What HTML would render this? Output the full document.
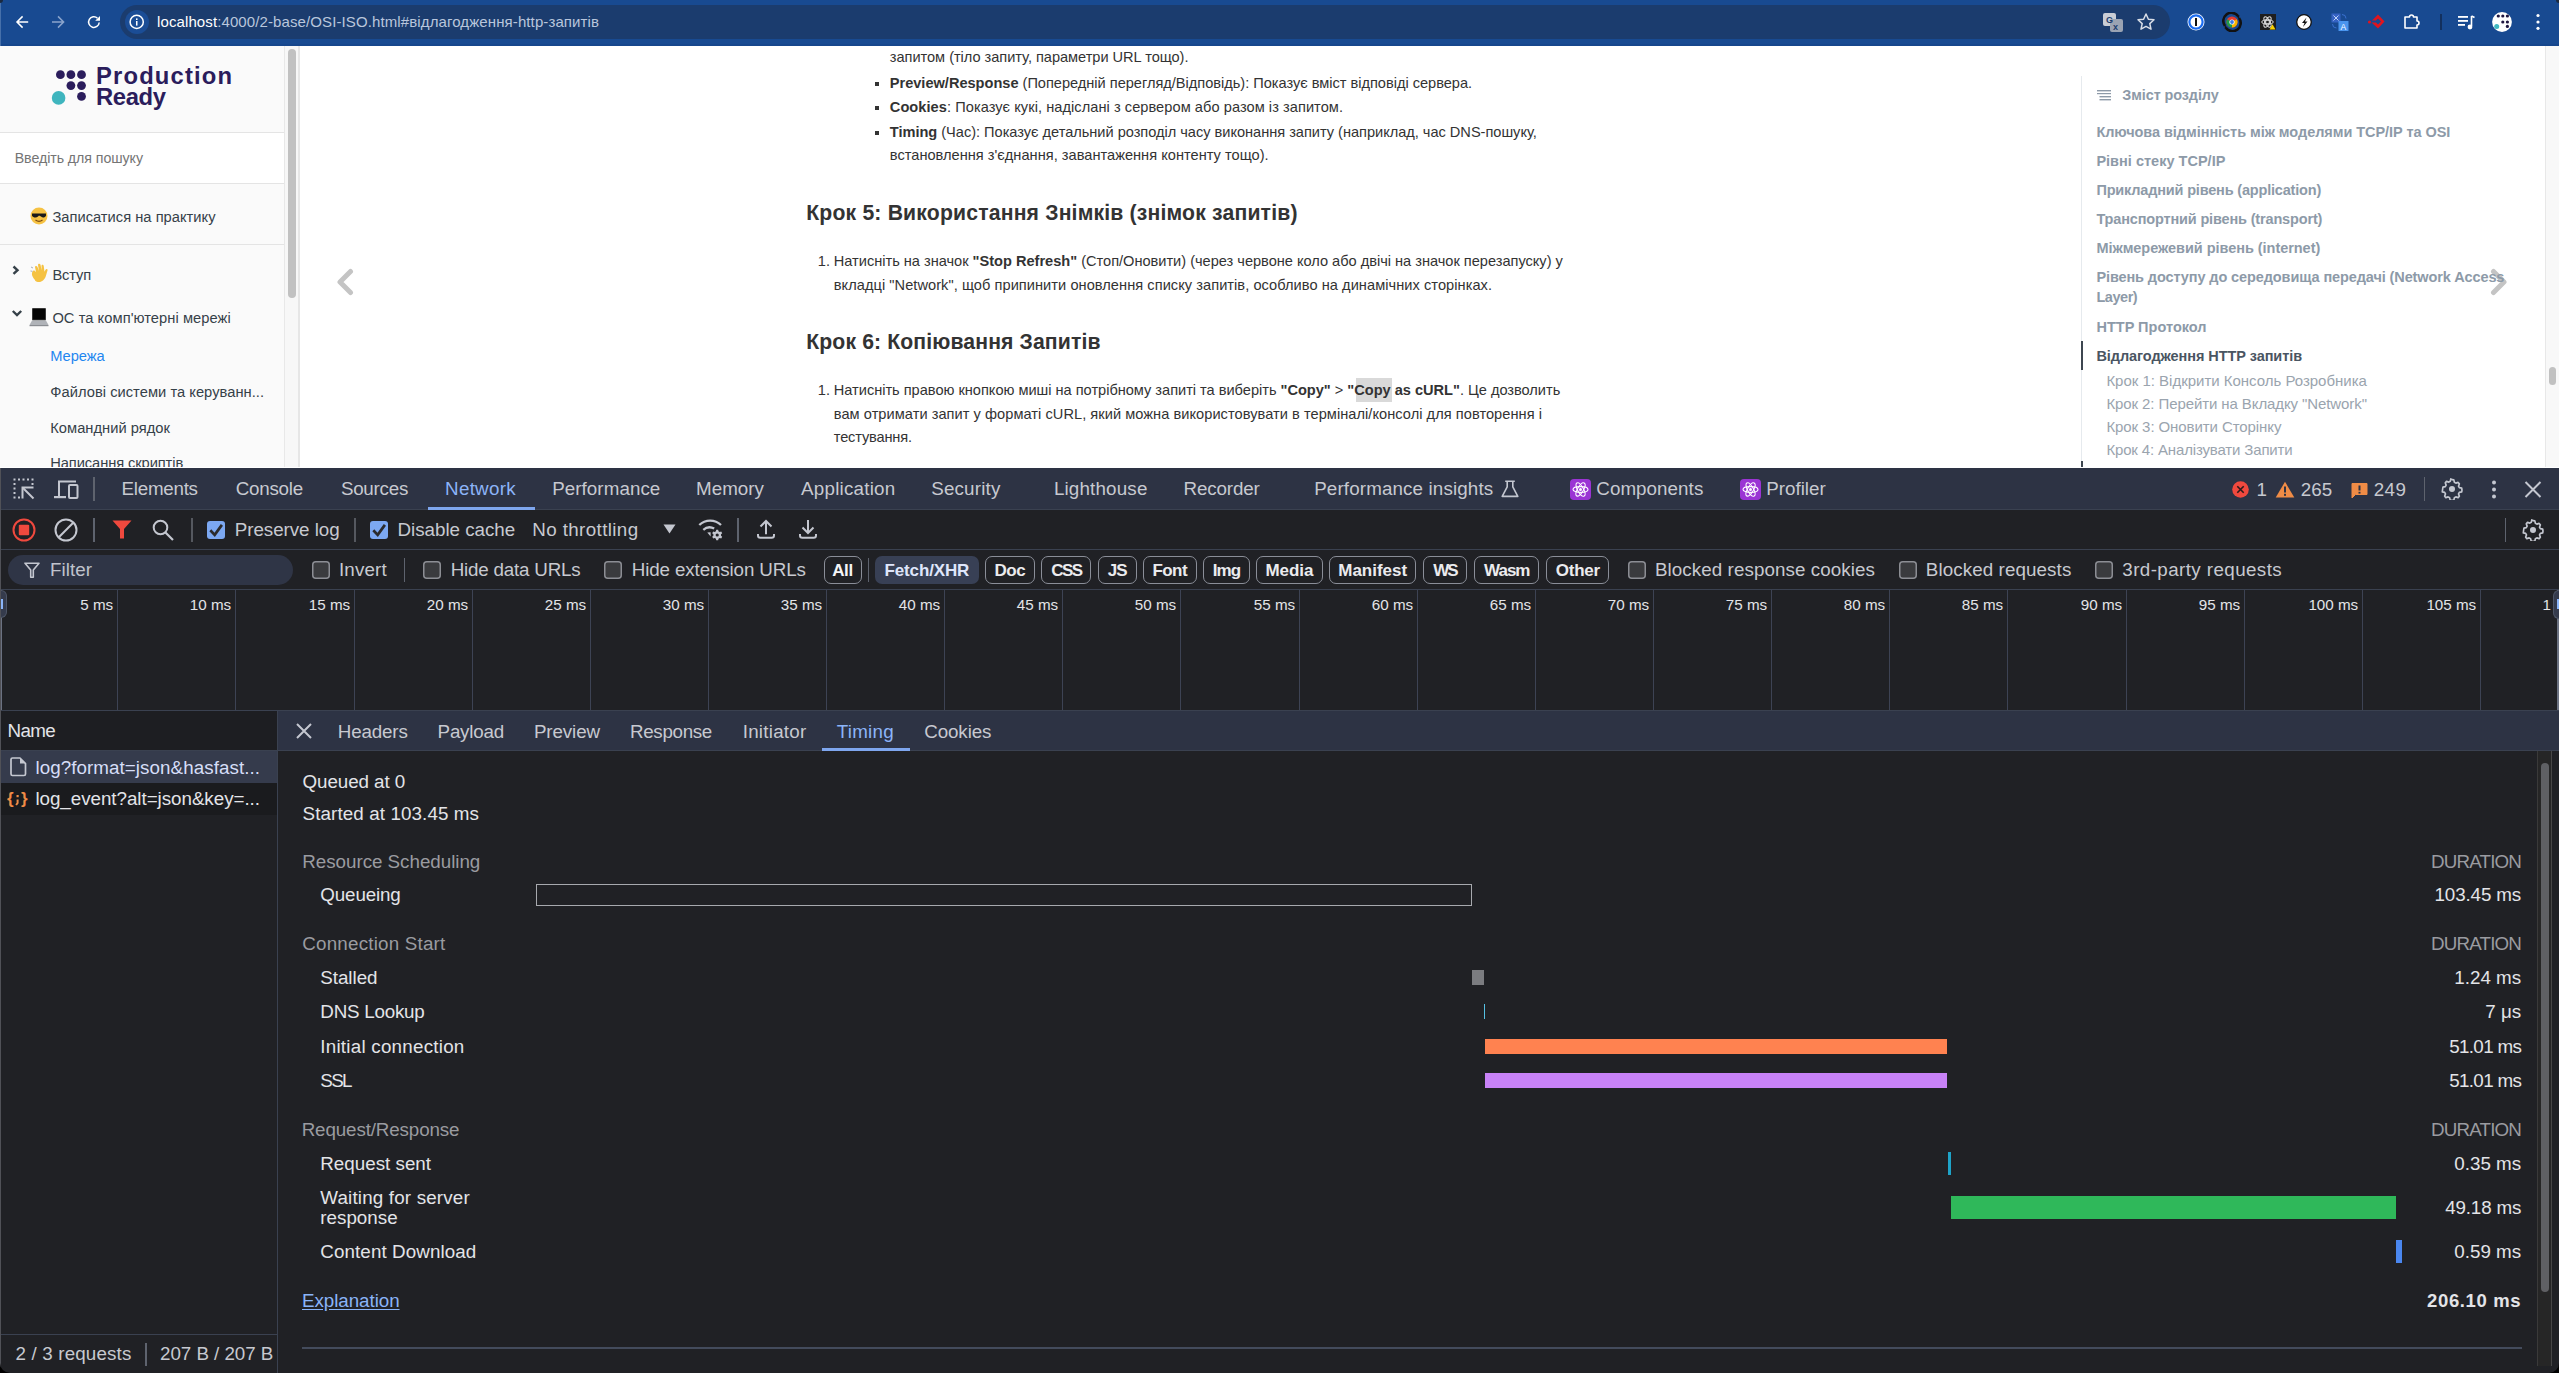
<!DOCTYPE html>
<html><head><meta charset="utf-8"><style>
html,body{margin:0;padding:0;}
body{width:2559px;height:1373px;position:relative;overflow:hidden;background:#202125;font-family:"Liberation Sans",sans-serif;}
body>div,body>svg{position:absolute;}
.t{white-space:nowrap;line-height:1;}
b{font-weight:700;}
</style></head><body>
<div style="left:0px;top:0px;width:2559px;height:46px;background:#184a91;"></div>
<div style="left:0px;top:44px;width:2559px;height:2px;background:#16468c;"></div>
<div style="left:0px;top:0px;width:1px;height:46px;background:#4670aa;"></div>
<div style="left:0px;top:0px;width:3px;height:3px;background:#1b2a40;border-bottom-right-radius:3px;"></div>
<div style="left:2556px;top:0px;width:3px;height:3px;background:#1b2a40;border-bottom-left-radius:3px;"></div>
<div style="left:120px;top:5px;width:2050px;height:34px;background:#1b3c6e;border-radius:17px;"></div>
<div style="left:124.5px;top:10px;width:24px;height:24px;background:#1b4d96;border-radius:12px;"></div>
<svg style="left:128px;top:13px;" width="18" height="18" viewBox="0 0 18 18"><circle cx="8.7" cy="8.9" r="6.6" fill="none" stroke="#fff" stroke-width="1.5"/><rect x="8" y="8" width="1.5" height="4.6" fill="#fff"/><rect x="8" y="5.4" width="1.5" height="1.6" fill="#fff"/></svg>
<svg style="left:14px;top:13px;" width="18" height="18" viewBox="0 0 18 18"><path d="M14.2 9H3M8.6 3.4L3 9l5.6 5.6" fill="none" stroke="#fff" stroke-width="1.5"/></svg>
<svg style="left:50px;top:13px;" width="18" height="18" viewBox="0 0 18 18"><path d="M2 9h11.5M8 3.4L13.6 9 8 14.6" fill="none" stroke="#8aa4cc" stroke-width="1.5"/></svg>
<svg style="left:85px;top:13px;" width="18" height="18" viewBox="0 0 18 18"><path d="M14.2 9.5A5.3 5.3 0 1 1 12.5 5.2" fill="none" stroke="#fff" stroke-width="1.5"/><path d="M15 3v4.8h-4.8z" fill="#fff"/></svg>
<div class="t" style="top:14.00px;font-size:15px;color:#b9c6dc;font-weight:400;letter-spacing:0.108px;left:157px;"><span style="color:#fff">localhost</span>:4000/2-base/OSI-ISO.html#відлагодження-http-запитів</div>
<svg style="left:2102px;top:11px;" width="24" height="22" viewBox="0 0 24 22"><rect x="1" y="2" width="13" height="13" rx="2" fill="#c9cdd6"/><rect x="8" y="8" width="13" height="13" rx="2" fill="#9aa3b3"/><text x="4" y="12" font-size="9" font-family="Liberation Sans" font-weight="700" fill="#1b3c6e">G</text><text x="11" y="19" font-size="9" font-family="Liberation Sans" font-weight="700" fill="#1b3c6e">x</text></svg>
<svg style="left:2136px;top:12px;" width="20" height="20" viewBox="0 0 20 20"><path d="M10 2l2.4 5.2 5.6.6-4.2 3.8 1.2 5.6L10 14.4 5 17.2l1.2-5.6L2 7.8l5.6-.6z" fill="none" stroke="#d8dde6" stroke-width="1.5" stroke-linejoin="round"/></svg>
<svg style="left:2186px;top:12px;" width="20" height="20" viewBox="0 0 20 20"><circle cx="10" cy="10" r="8.5" fill="#fff"/><circle cx="10" cy="10" r="6.6" fill="none" stroke="#1a6cf0" stroke-width="2.2"/><rect x="9" y="6" width="2" height="8" fill="#111"/></svg>
<svg style="left:2222px;top:12px;" width="20" height="20" viewBox="0 0 20 20"><path d="M3 14A7.5 7.5 0 0 1 16 4" fill="none" stroke="#111" stroke-width="2.6"/><path d="M17 6A7.5 7.5 0 0 1 4 16" fill="none" stroke="#111" stroke-width="2.6"/><path d="M14 2.5l3.5 1-1 3.5z" fill="#111"/><path d="M6 17.5l-3.5-1 1-3.5z" fill="#111"/><circle cx="10" cy="10" r="5.6" fill="#e33b2e"/><path d="M10 10L14.85 7.2A5.6 5.6 0 0 1 10 15.6z" fill="#f6b400"/><path d="M10 10L10 15.6A5.6 5.6 0 0 1 5.15 7.2z" fill="#1a9c4a"/><circle cx="10" cy="10" r="2.6" fill="#fff"/><circle cx="10" cy="10" r="1.9" fill="#3b78e7"/></svg>
<svg style="left:2260px;top:14px;" width="16" height="16" viewBox="0 0 16 16"><rect x="0" y="0" width="16" height="16" fill="#1e1e1e"/><ellipse cx="7.5" cy="8" rx="5.8" ry="2.3" fill="none" stroke="#ddd" stroke-width="1"/><ellipse cx="7.5" cy="8" rx="5.8" ry="2.3" fill="none" stroke="#ddd" stroke-width="1" transform="rotate(60 7.5 8)"/><ellipse cx="7.5" cy="8" rx="5.8" ry="2.3" fill="none" stroke="#ddd" stroke-width="1" transform="rotate(-60 7.5 8)"/><rect x="5.8" y="6.3" width="3.4" height="3.4" fill="none" stroke="#ddd" stroke-width="0.9"/><path d="M9.5 15.5l3-5.2 3 5.2z" fill="#f5d000"/></svg>
<svg style="left:2296px;top:14px;" width="16" height="16" viewBox="0 0 16 16"><circle cx="8" cy="8" r="7.3" fill="#fff" stroke="#111" stroke-width="1.3"/><path d="M10.5 3.5L6 9h2.5l-1.5 4 4.5-5.5H9z" fill="#111"/></svg>
<svg style="left:2331px;top:13px;" width="20" height="20" viewBox="0 0 20 20"><rect x="0.5" y="0.5" width="9" height="9" fill="#3563c4"/><rect x="7.5" y="8" width="10" height="10" rx="0.5" fill="#4a95ee"/><path d="M2.5 2.5l5 5M7.5 2.5l-5 5" stroke="#cfe0ff" stroke-width="0.9"/><text x="9.5" y="16.5" font-size="8.5" fill="#fff" font-family="Liberation Sans">A</text><path d="M11 1.5a4 4 0 0 1 4 4M1.5 11a4 4 0 0 0 4 4" fill="none" stroke="#3d74d6" stroke-width="0.9"/></svg>
<svg style="left:2367px;top:14px;" width="18" height="16" viewBox="0 0 18 16"><circle cx="2.5" cy="8" r="1.6" fill="#e0141e"/><path d="M11 0.5L17.5 7.5 11 14.5 4.5 8.5h4.5L11 10.5 14 7.5 11 4.5l-2 2H5z" fill="#e0141e"/></svg>
<svg style="left:2404px;top:13px;" width="18" height="17" viewBox="0 0 18 17"><path d="M1 4h4.5a2 2 0 0 1 4 0H13v4a2 2 0 0 1 0 4v3H1z" fill="none" stroke="#fff" stroke-width="1.6" stroke-linejoin="round"/></svg>
<div style="left:2440px;top:14px;width:2px;height:16px;background:#12305e;"></div>
<svg style="left:2456px;top:12px;" width="20" height="20" viewBox="0 0 20 20"><rect x="2" y="4" width="10" height="1.8" fill="#fff"/><rect x="2" y="8" width="10" height="1.8" fill="#fff"/><rect x="2" y="12" width="7" height="1.8" fill="#fff"/><path d="M15.5 4v10" stroke="#fff" stroke-width="1.6"/><circle cx="14" cy="15" r="2.4" fill="#fff"/><path d="M15.5 4l3 1.5" stroke="#fff" stroke-width="1.6"/></svg>
<svg style="left:2491px;top:11px;" width="22" height="22" viewBox="0 0 22 22"><circle cx="11" cy="11" r="9.9" fill="#fff"/><g fill="#1f1640"><circle cx="7.3" cy="5" r="1.6"/><circle cx="11.8" cy="5" r="1.6"/><circle cx="16.4" cy="5" r="1.6"/><circle cx="11.8" cy="11" r="1.6"/><circle cx="16.4" cy="11" r="1.6"/><circle cx="16.4" cy="15.4" r="1.6"/></g><circle cx="5.7" cy="15.6" r="2.5" fill="#3fb8c0"/></svg>
<svg style="left:2533px;top:12px;" width="10" height="20" viewBox="0 0 10 20"><circle cx="5" cy="3.5" r="1.6" fill="#fff"/><circle cx="5" cy="10" r="1.6" fill="#fff"/><circle cx="5" cy="16.3" r="1.6" fill="#fff"/></svg>
<div style="left:0px;top:46px;width:2559px;height:422px;background:#ffffff;"></div>
<div style="left:0px;top:46px;width:285px;height:422px;background:#fafafa;"></div>
<div style="left:284px;top:46px;width:1px;height:422px;background:#e8e8e8;"></div>
<div style="left:285px;top:46px;width:14px;height:422px;background:#f7f7f7;"></div>
<div style="left:298px;top:46px;width:2px;height:422px;background:#e6e6e6;"></div>
<div style="left:288px;top:49px;width:8px;height:249px;background:#c1c1c1;border-radius:4px;"></div>
<svg style="left:50px;top:64px;overflow:visible;" width="32" height="42" viewBox="0 0 32 42"><g fill="#2b1d5c"><circle cx="10.4" cy="10.7" r="4.4"/><circle cx="20.9" cy="10.7" r="4.4"/><circle cx="31.5" cy="10.7" r="4.4"/><circle cx="20.9" cy="21.6" r="4.4"/><circle cx="31.5" cy="21.6" r="4.4"/><circle cx="31.5" cy="32.4" r="4.4"/></g><circle cx="8.6" cy="33.9" r="6.8" fill="#3fb5be"/></svg>
<div class="t" style="top:64.00px;font-size:23.8px;color:#2b1d5c;font-weight:700;letter-spacing:1.167px;left:96px;">Production</div>
<div class="t" style="top:85.00px;font-size:23.8px;color:#2b1d5c;font-weight:700;letter-spacing:-0.384px;left:96px;">Ready</div>
<div style="left:0px;top:132px;width:284px;height:1px;background:#e4e4e4;"></div>
<div style="left:0px;top:133px;width:284px;height:50px;background:#ffffff;"></div>
<div style="left:0px;top:183px;width:284px;height:1px;background:#e4e4e4;"></div>
<div class="t" style="top:151.00px;font-size:14.2px;color:#757575;font-weight:400;letter-spacing:-0.063px;left:14.7px;">Введіть для пошуку</div>
<div style="left:0px;top:244px;width:284px;height:1px;background:#e4e4e4;"></div>
<svg style="left:30px;top:207px;" width="18" height="18" viewBox="0 0 18 18"><circle cx="9" cy="9" r="8.5" fill="#f6c243"/><path d="M2 6.5h14v2.2c-1 2-3.5 2.3-5 .8L9 8.4 8 9.5C6.5 11 3 10.7 2 8.7z" fill="#1a1a1a"/><path d="M5.5 13c2 1.5 5 1.5 7 0" stroke="#7a4a12" stroke-width="1.2" fill="none"/></svg>
<div class="t" style="top:210.00px;font-size:14.7px;color:#364149;font-weight:400;letter-spacing:0.014px;left:52.4px;">Записатися на практику</div>
<svg style="left:11px;top:264px;" width="9" height="12" viewBox="0 0 9 12"><path d="M2.5 2.5l4 3.7-4 3.7" fill="none" stroke="#364149" stroke-width="2.4"/></svg>
<svg style="left:30px;top:263px;" width="19" height="20" viewBox="0 0 19 20"><path d="M5 17c-3-3-4-7-2-9 1-1 2 0 3 1l-1-5c0-1.5 2-1.5 2.5 0l1.5 4-1-6c0-1.5 2-1.7 2.5-.2l1.2 5.5-.2-4.5c0-1.5 2-1.5 2.2 0l.8 6 1-2c.8-1.5 2.5-.8 2 .8l-1.5 5c-1 4-4 6.5-7 6.5-1.5 0-3-.5-4-1.6z" fill="#f5c242"/><path d="M1 4l2 1M0.5 8l2 .3" stroke="#a8b0bc" stroke-width="1"/></svg>
<div class="t" style="top:268.00px;font-size:14.7px;color:#364149;font-weight:400;letter-spacing:-0.111px;left:52.4px;">Вступ</div>
<svg style="left:11px;top:309px;" width="12" height="10" viewBox="0 0 12 10"><path d="M1.8 2l4.2 4 4.2-4" fill="none" stroke="#364149" stroke-width="2.4"/></svg>
<svg style="left:29px;top:307px;" width="20" height="20" viewBox="0 0 20 20"><rect x="3" y="1" width="14" height="12.5" rx="1" fill="#3a3a3a"/><rect x="4" y="2" width="12" height="10.5" fill="#050505"/><path d="M3 13.5h14l2.5 4.5H0.5z" fill="#b0b3b8"/><rect x="0.5" y="18" width="19" height="1.2" fill="#8a8d92"/></svg>
<div class="t" style="top:311.00px;font-size:14.7px;color:#364149;font-weight:400;letter-spacing:0.051px;left:52.4px;">ОС та комп'ютерні мережі</div>
<div class="t" style="top:349.00px;font-size:14.7px;color:#1f86f0;font-weight:400;letter-spacing:-0.087px;left:50.3px;">Мережа</div>
<div class="t" style="top:385.00px;font-size:14.7px;color:#364149;font-weight:400;letter-spacing:0.031px;left:50.3px;">Файлові системи та керуванн...</div>
<div class="t" style="top:421.00px;font-size:14.7px;color:#364149;font-weight:400;letter-spacing:0.021px;left:50.3px;">Командний рядок</div>
<div class="t" style="top:456.00px;font-size:14.7px;color:#364149;font-weight:400;letter-spacing:-0.100px;left:50.3px;">Написання скриптів</div>
<div class="t" style="top:50.00px;font-size:14.6px;color:#333333;font-weight:400;letter-spacing:-0.032px;left:889.8px;">запитом (тіло запиту, параметри URL тощо).</div>
<div style="left:875px;top:82px;width:4px;height:4px;background:#333;"></div>
<div class="t" style="top:76.00px;font-size:14.6px;color:#333333;font-weight:400;letter-spacing:-0.017px;left:889.8px;"><b>Preview/Response</b> (Попередній перегляд/Відповідь): Показує вміст відповіді сервера.</div>
<div style="left:875px;top:106px;width:4px;height:4px;background:#333;"></div>
<div class="t" style="top:100.00px;font-size:14.6px;color:#333333;font-weight:400;letter-spacing:0.056px;left:889.8px;"><b>Cookies</b>: Показує кукі, надіслані з сервером або разом із запитом.</div>
<div style="left:875px;top:131px;width:4px;height:4px;background:#333;"></div>
<div class="t" style="top:125.00px;font-size:14.6px;color:#333333;font-weight:400;letter-spacing:-0.020px;left:889.8px;"><b>Timing</b> (Час): Показує детальний розподіл часу виконання запиту (наприклад, час DNS-пошуку,</div>
<div class="t" style="top:148.00px;font-size:14.6px;color:#333333;font-weight:400;letter-spacing:0.018px;left:889.8px;">встановлення з'єднання, завантаження контенту тощо).</div>
<div class="t" style="top:202.00px;font-size:21.2px;color:#333333;font-weight:700;letter-spacing:0.170px;left:806.25px;">Крок 5: Використання Знімків (знімок запитів)</div>
<div class="t" style="top:254.00px;font-size:14.6px;color:#333333;font-weight:400;left:817.8px;">1.</div>
<div class="t" style="top:254.00px;font-size:14.6px;color:#333333;font-weight:400;letter-spacing:-0.012px;left:833.8px;">Натисніть на значок <b>"Stop Refresh"</b> (Стоп/Оновити) (через червоне коло або двічі на значок перезапуску) у</div>
<div class="t" style="top:278.00px;font-size:14.6px;color:#333333;font-weight:400;letter-spacing:0.054px;left:833.8px;">вкладці "Network", щоб припинити оновлення списку запитів, особливо на динамічних сторінках.</div>
<div class="t" style="top:331.00px;font-size:21.2px;color:#333333;font-weight:700;letter-spacing:0.119px;left:806.25px;">Крок 6: Копіювання Запитів</div>
<div style="left:1356px;top:378px;width:36px;height:24px;background:#d9d9d9;"></div>
<div class="t" style="top:383.00px;font-size:14.6px;color:#333333;font-weight:400;left:817.8px;">1.</div>
<div class="t" style="top:383.00px;font-size:14.6px;color:#333333;font-weight:400;letter-spacing:-0.017px;left:833.8px;">Натисніть правою кнопкою миші на потрібному запиті та виберіть <b>"Copy"</b> &gt; <b>"Copy as cURL"</b>. Це дозволить</div>
<div class="t" style="top:407.00px;font-size:14.6px;color:#333333;font-weight:400;letter-spacing:0.048px;left:833.8px;">вам отримати запит у форматі cURL, який можна використовувати в терміналі/консолі для повторення і</div>
<div class="t" style="top:430.00px;font-size:14.6px;color:#333333;font-weight:400;letter-spacing:-0.166px;left:833.8px;">тестування.</div>
<svg style="left:335px;top:268px;" width="20" height="30" viewBox="0 0 20 30"><path d="M15.5 3.5L5 14l10.5 10.5" fill="none" stroke="#c4c4c4" stroke-width="5" stroke-linejoin="round" stroke-linecap="round"/></svg>
<svg style="left:2489px;top:268px;" width="20" height="30" viewBox="0 0 20 30"><path d="M4.5 3.5L15 14 4.5 24.5" fill="none" stroke="#c4c4c4" stroke-width="5" stroke-linejoin="round" stroke-linecap="round"/></svg>
<div style="left:2081px;top:76px;width:1px;height:392px;background:#e6eaee;"></div>
<svg style="left:2096px;top:89px;" width="16" height="12" viewBox="0 0 16 12"><g fill="#8d9aa8"><rect x="1" y="1" width="14" height="1.4"/><rect x="1" y="4" width="14" height="1.2"/><rect x="3.5" y="7" width="11.5" height="1.4"/><rect x="3.5" y="10" width="11.5" height="1.4"/></g></svg>
<div class="t" style="top:88.00px;font-size:14.4px;color:#8d9aa8;font-weight:700;letter-spacing:-0.079px;left:2122.3px;">Зміст розділу</div>
<div class="t" style="top:125.00px;font-size:14.5px;color:#8d9aa8;font-weight:700;letter-spacing:-0.047px;left:2096.4px;">Ключова відмінність між моделями TCP/IP та OSI</div>
<div class="t" style="top:154.00px;font-size:14.5px;color:#8d9aa8;font-weight:700;letter-spacing:0.015px;left:2096.4px;">Рівні стеку TCP/IP</div>
<div class="t" style="top:183.00px;font-size:14.5px;color:#8d9aa8;font-weight:700;letter-spacing:-0.180px;left:2096.4px;">Прикладний рівень (application)</div>
<div class="t" style="top:212.00px;font-size:14.5px;color:#8d9aa8;font-weight:700;letter-spacing:-0.157px;left:2096.4px;">Транспортний рівень (transport)</div>
<div class="t" style="top:241.00px;font-size:14.5px;color:#8d9aa8;font-weight:700;letter-spacing:-0.040px;left:2096.4px;">Міжмережевий рівень (internet)</div>
<div class="t" style="top:270.00px;font-size:14.5px;color:#8d9aa8;font-weight:700;letter-spacing:-0.105px;left:2096.4px;">Рівень доступу до середовища передачі (Network Access</div>
<div class="t" style="top:290.00px;font-size:14.5px;color:#8d9aa8;font-weight:700;letter-spacing:-0.446px;left:2096.4px;">Layer)</div>
<div class="t" style="top:320.00px;font-size:14.5px;color:#8d9aa8;font-weight:700;letter-spacing:0.021px;left:2096.4px;">HTTP Протокол</div>
<div style="left:2081px;top:341px;width:2px;height:29px;background:#3d4650;"></div>
<div class="t" style="top:349.00px;font-size:14.5px;color:#4a5562;font-weight:700;letter-spacing:-0.063px;left:2096.4px;">Відлагодження HTTP запитів</div>
<div class="t" style="top:373.00px;font-size:15px;color:#9aa4ae;font-weight:400;letter-spacing:-0.014px;left:2106.4px;">Крок 1: Відкрити Консоль Розробника</div>
<div class="t" style="top:396.00px;font-size:15px;color:#9aa4ae;font-weight:400;letter-spacing:-0.094px;left:2106.4px;">Крок 2: Перейти на Вкладку "Network"</div>
<div class="t" style="top:419.00px;font-size:15px;color:#9aa4ae;font-weight:400;letter-spacing:-0.085px;left:2106.4px;">Крок 3: Оновити Сторінку</div>
<div class="t" style="top:442.00px;font-size:15px;color:#9aa4ae;font-weight:400;letter-spacing:-0.154px;left:2106.4px;">Крок 4: Аналізувати Запити</div>
<div style="left:2081px;top:461px;width:2px;height:7px;background:#3d4650;"></div>
<div style="left:2545px;top:46px;width:14px;height:422px;background:#f8f8f8;"></div>
<div style="left:2545px;top:46px;width:1px;height:422px;background:#e8e8e8;"></div>
<div style="left:2549px;top:367px;width:7px;height:18px;background:#c1c1c1;border-radius:3.5px;"></div>
<div style="left:0px;top:467px;width:2559px;height:1px;background:#ffffff;"></div>
<div style="left:0px;top:468px;width:2559px;height:905px;background:#202125;"></div>
<div style="left:0px;top:468px;width:2559px;height:41px;background:#2d3344;"></div>
<div style="left:0px;top:509px;width:2559px;height:1px;background:#3a4150;"></div>
<svg style="left:12px;top:477px;" width="24" height="24" viewBox="0 0 24 24"><g fill="#c4c7d0"><rect x="1.5" y="1.5" width="2" height="2"/><rect x="6" y="1.5" width="2" height="2"/><rect x="10.5" y="1.5" width="2" height="2"/><rect x="15" y="1.5" width="2" height="2"/><rect x="19.5" y="1.5" width="2" height="2"/><rect x="1.5" y="6" width="2" height="2"/><rect x="1.5" y="10.5" width="2" height="2"/><rect x="1.5" y="15" width="2" height="2"/><rect x="1.5" y="19.5" width="2" height="2"/><rect x="6" y="19.5" width="2" height="2"/><rect x="19.5" y="6" width="2" height="2"/></g><path d="M21.5 10.5H10.5V21.5" fill="none" stroke="#c4c7d0" stroke-width="2"/><path d="M11 11l10.5 10.5" stroke="#c4c7d0" stroke-width="2"/></svg>
<svg style="left:54px;top:480px;" width="26" height="22" viewBox="0 0 26 22"><path d="M5 16V1.5h17" fill="none" stroke="#c4c7d0" stroke-width="2"/><rect x="0" y="16" width="12" height="2.2" fill="#c4c7d0"/><rect x="15" y="5" width="8.5" height="13" rx="1" fill="none" stroke="#c4c7d0" stroke-width="2"/></svg>
<div style="left:93px;top:477px;width:2px;height:24px;background:#5e636e;"></div>
<div class="t" style="top:480.00px;font-size:18.8px;color:#c7c9d0;font-weight:400;letter-spacing:-0.271px;left:121.6px;">Elements</div>
<div class="t" style="top:480.00px;font-size:18.8px;color:#c7c9d0;font-weight:400;letter-spacing:-0.254px;left:235.7px;">Console</div>
<div class="t" style="top:480.00px;font-size:18.8px;color:#c7c9d0;font-weight:400;letter-spacing:-0.251px;left:340.9px;">Sources</div>
<div class="t" style="top:480.00px;font-size:18.8px;color:#8cb4f8;font-weight:400;letter-spacing:0.268px;left:445.1px;">Network</div>
<div class="t" style="top:480.00px;font-size:18.8px;color:#c7c9d0;font-weight:400;letter-spacing:0.058px;left:552.2px;">Performance</div>
<div class="t" style="top:480.00px;font-size:18.8px;color:#c7c9d0;font-weight:400;letter-spacing:0.034px;left:696px;">Memory</div>
<div class="t" style="top:480.00px;font-size:18.8px;color:#c7c9d0;font-weight:400;letter-spacing:0.221px;left:801.1px;">Application</div>
<div class="t" style="top:480.00px;font-size:18.8px;color:#c7c9d0;font-weight:400;letter-spacing:0.179px;left:931.2px;">Security</div>
<div class="t" style="top:480.00px;font-size:18.8px;color:#c7c9d0;font-weight:400;letter-spacing:0.177px;left:1053.9px;">Lighthouse</div>
<div class="t" style="top:480.00px;font-size:18.8px;color:#c7c9d0;font-weight:400;letter-spacing:-0.150px;left:1183.6px;">Recorder</div>
<div class="t" style="top:480.00px;font-size:18.8px;color:#c7c9d0;font-weight:400;letter-spacing:0.136px;left:1314.2px;">Performance insights</div>
<div class="t" style="top:480.00px;font-size:18.8px;color:#c7c9d0;font-weight:400;letter-spacing:0.056px;left:1596.3px;">Components</div>
<div class="t" style="top:480.00px;font-size:18.8px;color:#c7c9d0;font-weight:400;letter-spacing:0.014px;left:1766.2px;">Profiler</div>
<div style="left:428px;top:507px;width:107px;height:3px;background:#7ea6ee;"></div>
<svg style="left:1501px;top:480px;" width="18" height="18" viewBox="0 0 18 18"><path d="M4.2 1.2h9.6M6.2 1.2v5.6L1.2 16.4h15.6L11.8 6.8V1.2" fill="none" stroke="#c4c7d0" stroke-width="1.6" stroke-linejoin="round"/></svg>
<svg style="left:1570px;top:478.5px;" width="21" height="21" viewBox="0 0 21 21"><rect x="0" y="0" width="21" height="21" rx="4" fill="#9b34d4"/><g fill="none" stroke="#fff" stroke-width="1.1"><ellipse cx="10.5" cy="10.5" rx="7.5" ry="2.9"/><ellipse cx="10.5" cy="10.5" rx="7.5" ry="2.9" transform="rotate(60 10.5 10.5)"/><ellipse cx="10.5" cy="10.5" rx="7.5" ry="2.9" transform="rotate(-60 10.5 10.5)"/></g><circle cx="10.5" cy="10.5" r="1.5" fill="#fff"/></svg>
<svg style="left:1740px;top:478.5px;" width="21" height="21" viewBox="0 0 21 21"><rect x="0" y="0" width="21" height="21" rx="4" fill="#9b34d4"/><g fill="none" stroke="#fff" stroke-width="1.1"><ellipse cx="10.5" cy="10.5" rx="7.5" ry="2.9"/><ellipse cx="10.5" cy="10.5" rx="7.5" ry="2.9" transform="rotate(60 10.5 10.5)"/><ellipse cx="10.5" cy="10.5" rx="7.5" ry="2.9" transform="rotate(-60 10.5 10.5)"/></g><circle cx="10.5" cy="10.5" r="1.5" fill="#fff"/></svg>
<svg style="left:2232px;top:481px;" width="17" height="17" viewBox="0 0 17 17"><circle cx="8.5" cy="8.5" r="8.3" fill="#f0493e"/><path d="M5.3 5.3l6.4 6.4M11.7 5.3l-6.4 6.4" stroke="#2a1a1a" stroke-width="1.6"/></svg>
<div class="t" style="top:481.00px;font-size:18.8px;color:#c7c9d0;font-weight:400;left:2256.4px;">1</div>
<svg style="left:2275px;top:481px;" width="20" height="17" viewBox="0 0 20 17"><path d="M10 0.8L19.3 16.5H0.7z" fill="#f08c46"/><rect x="9" y="5.5" width="2" height="6" fill="#2d3344"/><rect x="9" y="12.8" width="2" height="2" fill="#2d3344"/></svg>
<div class="t" style="top:481.00px;font-size:18.8px;color:#c7c9d0;font-weight:400;letter-spacing:0.078px;left:2300.8px;">265</div>
<svg style="left:2351px;top:482px;" width="17" height="17" viewBox="0 0 17 17"><path d="M1 1.5h15v11H4.5L1 16z" fill="#f08c46" stroke="#f08c46" stroke-width="1" stroke-linejoin="round"/><rect x="7.5" y="3.5" width="2" height="5" fill="#2d3344"/><rect x="7.5" y="9.8" width="2" height="1.8" fill="#2d3344"/></svg>
<div class="t" style="top:481.00px;font-size:18.8px;color:#c7c9d0;font-weight:400;letter-spacing:0.478px;left:2373.7px;">249</div>
<div style="left:2424px;top:477px;width:1px;height:24px;background:#5e636e;"></div>
<svg style="left:2441px;top:478px;" width="22" height="22" viewBox="0 0 22 22"><g transform="scale(0.9166666666666666)"><path d="M12 1.8l2 .3.6 2.6 1.6.9 2.5-.8 1.3 1.6-.9 2.5.9 1.6 2.6.6.3 2-.3 2-2.6.6-.9 1.6.9 2.5-1.3 1.6-2.5-.8-1.6.9-.6 2.6-2 .3-2-.3-.6-2.6-1.6-.9-2.5.8-1.3-1.6.9-2.5-.9-1.6-2.6-.6L1.8 12l.3-2 2.6-.6.9-1.6-.9-2.5 1.3-1.6 2.5.8 1.6-.9.6-2.6z" fill="none" stroke="#c4c7d0" stroke-width="1.8" stroke-linejoin="round"/><circle cx="12" cy="12" r="3.3" fill="#c4c7d0"/></g></svg>
<svg style="left:2488px;top:478px;" width="12" height="24" viewBox="0 0 12 24"><circle cx="6" cy="4.5" r="2" fill="#c4c7d0"/><circle cx="6" cy="11.5" r="2" fill="#c4c7d0"/><circle cx="6" cy="18.5" r="2" fill="#c4c7d0"/></svg>
<svg style="left:2524px;top:481px;" width="18" height="17" viewBox="0 0 18 17"><path d="M1.5 1l15 15M16.5 1l-15 15" stroke="#c4c7d0" stroke-width="2"/></svg>
<div style="left:0px;top:549px;width:2559px;height:1px;background:#3a4150;"></div>
<svg style="left:12px;top:518px;" width="24" height="24" viewBox="0 0 24 24"><circle cx="12" cy="12" r="10.5" fill="none" stroke="#f0493e" stroke-width="2"/><rect x="6.8" y="6.8" width="10.4" height="10.4" rx="1" fill="#f0493e"/></svg>
<svg style="left:54px;top:518px;" width="24" height="24" viewBox="0 0 24 24"><circle cx="12" cy="12" r="10.5" fill="none" stroke="#c4c7d0" stroke-width="2"/><path d="M4.8 19.2L19.2 4.8" stroke="#c4c7d0" stroke-width="2"/></svg>
<div style="left:93px;top:518px;width:2px;height:24px;background:#5e636e;"></div>
<svg style="left:112px;top:520px;" width="20" height="19" viewBox="0 0 20 19"><path d="M0.5 0.5h19L12 9v9.5H8V9z" fill="#f0493e"/></svg>
<svg style="left:152px;top:519px;" width="24" height="22" viewBox="0 0 24 22"><circle cx="8.5" cy="8.5" r="6.8" fill="none" stroke="#c4c7d0" stroke-width="2"/><path d="M13.5 13.5l7.5 7.5" stroke="#c4c7d0" stroke-width="2.2"/></svg>
<div style="left:191px;top:518px;width:2px;height:24px;background:#55585f;"></div>
<svg style="left:207px;top:521px;" width="18" height="18" viewBox="0 0 18 18"><rect x="0" y="0" width="18" height="18" rx="3" fill="#7ca8f2"/><path d="M3.3 9.3l4.4 4.6 7.2-10" fill="none" stroke="#2b2b2d" stroke-width="2.7"/></svg>
<div class="t" style="top:521.00px;font-size:18.8px;color:#c7c9d0;font-weight:400;letter-spacing:-0.058px;left:234.8px;">Preserve log</div>
<div style="left:353.5px;top:518px;width:2px;height:24px;background:#55585f;"></div>
<svg style="left:370px;top:521px;" width="18" height="18" viewBox="0 0 18 18"><rect x="0" y="0" width="18" height="18" rx="3" fill="#7ca8f2"/><path d="M3.3 9.3l4.4 4.6 7.2-10" fill="none" stroke="#2b2b2d" stroke-width="2.7"/></svg>
<div class="t" style="top:521.00px;font-size:18.8px;color:#c7c9d0;font-weight:400;letter-spacing:-0.024px;left:397.5px;">Disable cache</div>
<div class="t" style="top:521.00px;font-size:18.8px;color:#c7c9d0;font-weight:400;letter-spacing:0.378px;left:532.3px;">No throttling</div>
<svg style="left:663px;top:524px;" width="13" height="10" viewBox="0 0 13 10"><path d="M0.5 0.5h12L6.5 9.5z" fill="#c4c7d0"/></svg>
<svg style="left:697px;top:518px;" width="27" height="24" viewBox="0 0 27 24"><path d="M2.3 7A15.5 15.5 0 0 1 24 7" fill="none" stroke="#c4c7d0" stroke-width="2.3"/><path d="M6.3 11.8A9.5 9.5 0 0 1 17.2 10.6" fill="none" stroke="#c4c7d0" stroke-width="2.3"/><path d="M10.3 14.6L13.6 14.2L13.6 18.6Z" fill="#c4c7d0"/><path d="M18.92 13.32 L19.21 11.79 L21.19 11.79 L21.48 13.32 L22.75 14.05 L24.21 13.54 L25.21 15.26 L24.03 16.27 L24.03 17.73 L25.21 18.74 L24.21 20.46 L22.75 19.95 L21.48 20.68 L21.19 22.21 L19.21 22.21 L18.92 20.68 L17.65 19.95 L16.19 20.46 L15.19 18.74 L16.37 17.73 L16.37 16.27 L15.19 15.26 L16.19 13.54 L17.65 14.05 Z" fill="#c4c7d0"/><circle cx="20.2" cy="17" r="1.6" fill="#202125"/></svg>
<div style="left:737px;top:518px;width:2px;height:24px;background:#5e636e;"></div>
<svg style="left:756px;top:519px;" width="20" height="21" viewBox="0 0 20 21"><path d="M10 15.2V2M4.5 7.5L10 2l5.5 5.5" fill="none" stroke="#c4c7d0" stroke-width="2"/><path d="M2 15v1.5a2.3 2.3 0 0 0 2.3 2.3h11.4a2.3 2.3 0 0 0 2.3-2.3V15" fill="none" stroke="#c4c7d0" stroke-width="2"/></svg>
<svg style="left:798px;top:519px;" width="20" height="21" viewBox="0 0 20 21"><path d="M10 1v13M4.5 8.5L10 14l5.5-5.5" fill="none" stroke="#c4c7d0" stroke-width="2"/><path d="M2 15v1.5a2.3 2.3 0 0 0 2.3 2.3h11.4a2.3 2.3 0 0 0 2.3-2.3V15" fill="none" stroke="#c4c7d0" stroke-width="2"/></svg>
<div style="left:2505px;top:518px;width:1px;height:24px;background:#5e636e;"></div>
<svg style="left:2522px;top:519px;" width="22" height="22" viewBox="0 0 22 22"><g transform="scale(0.9166666666666666)"><path d="M12 1.8l2 .3.6 2.6 1.6.9 2.5-.8 1.3 1.6-.9 2.5.9 1.6 2.6.6.3 2-.3 2-2.6.6-.9 1.6.9 2.5-1.3 1.6-2.5-.8-1.6.9-.6 2.6-2 .3-2-.3-.6-2.6-1.6-.9-2.5.8-1.3-1.6.9-2.5-.9-1.6-2.6-.6L1.8 12l.3-2 2.6-.6.9-1.6-.9-2.5 1.3-1.6 2.5.8 1.6-.9.6-2.6z" fill="none" stroke="#c4c7d0" stroke-width="1.8" stroke-linejoin="round"/><circle cx="12" cy="12" r="3.3" fill="#c4c7d0"/></g></svg>
<div style="left:0px;top:589px;width:2559px;height:1px;background:#3a4150;"></div>
<div style="left:8px;top:555px;width:285px;height:30px;background:#2f3546;border-radius:15px;"></div>
<svg style="left:24px;top:562px;" width="16" height="16" viewBox="0 0 16 16"><path d="M1 1.2h14L9.3 8v7.2H6.7V8z" fill="none" stroke="#c4c7d0" stroke-width="1.6" stroke-linejoin="round"/></svg>
<div class="t" style="top:561.00px;font-size:18.8px;color:#c0c3cc;font-weight:400;letter-spacing:0.050px;left:50px;">Filter</div>
<svg style="left:312px;top:561px;" width="18" height="18" viewBox="0 0 18 18"><rect x="0.75" y="0.75" width="16.5" height="16.5" rx="3" fill="#3a3b3e" stroke="#8c8e94" stroke-width="1.5"/></svg>
<div class="t" style="top:561.00px;font-size:18.8px;color:#c7c9d0;font-weight:400;letter-spacing:0.143px;left:339px;">Invert</div>
<div style="left:404px;top:558px;width:1px;height:24px;background:#5e636e;"></div>
<svg style="left:423px;top:561px;" width="18" height="18" viewBox="0 0 18 18"><rect x="0.75" y="0.75" width="16.5" height="16.5" rx="3" fill="#3a3b3e" stroke="#8c8e94" stroke-width="1.5"/></svg>
<div class="t" style="top:561.00px;font-size:18.8px;color:#c7c9d0;font-weight:400;letter-spacing:-0.200px;left:450.7px;">Hide data URLs</div>
<svg style="left:604px;top:561px;" width="18" height="18" viewBox="0 0 18 18"><rect x="0.75" y="0.75" width="16.5" height="16.5" rx="3" fill="#3a3b3e" stroke="#8c8e94" stroke-width="1.5"/></svg>
<div class="t" style="top:561.00px;font-size:18.8px;color:#c7c9d0;font-weight:400;letter-spacing:-0.119px;left:631.7px;">Hide extension URLs</div>
<div style="left:823.5px;top:556px;width:38.0px;height:28px;background:transparent;box-sizing:border-box;border:1.3px solid #8a8e98;border-radius:7px;"></div>
<div class="t" style="top:562.00px;font-size:17px;color:#f4f4f6;font-weight:700;letter-spacing:-0.367px;left:842.5px;transform:translateX(-50%);">All</div>
<div style="left:868px;top:558px;width:1px;height:24px;background:#5e636e;"></div>
<div style="left:875.2px;top:556px;width:103.39999999999998px;height:28px;background:#384055;border-radius:7px;"></div>
<div class="t" style="top:562.00px;font-size:17px;color:#dfe6fb;font-weight:700;letter-spacing:-0.134px;left:926.9000000000001px;transform:translateX(-50%);">Fetch/XHR</div>
<div style="left:985px;top:556px;width:49.90000000000009px;height:28px;background:transparent;box-sizing:border-box;border:1.3px solid #8a8e98;border-radius:7px;"></div>
<div class="t" style="top:562.00px;font-size:17px;color:#ebebee;font-weight:700;letter-spacing:-0.362px;left:1009.95px;transform:translateX(-50%);">Doc</div>
<div style="left:1041.3px;top:556px;width:50.200000000000045px;height:28px;background:transparent;box-sizing:border-box;border:1.3px solid #8a8e98;border-radius:7px;"></div>
<div class="t" style="top:562.00px;font-size:17px;color:#ebebee;font-weight:700;letter-spacing:-1.634px;left:1066.4px;transform:translateX(-50%);">CSS</div>
<div style="left:1098px;top:556px;width:38.5px;height:28px;background:transparent;box-sizing:border-box;border:1.3px solid #8a8e98;border-radius:7px;"></div>
<div class="t" style="top:562.00px;font-size:17px;color:#ebebee;font-weight:700;letter-spacing:-0.797px;left:1117.25px;transform:translateX(-50%);">JS</div>
<div style="left:1143px;top:556px;width:53.5px;height:28px;background:transparent;box-sizing:border-box;border:1.3px solid #8a8e98;border-radius:7px;"></div>
<div class="t" style="top:562.00px;font-size:17px;color:#ebebee;font-weight:700;letter-spacing:-0.609px;left:1169.75px;transform:translateX(-50%);">Font</div>
<div style="left:1203px;top:556px;width:46.799999999999955px;height:28px;background:transparent;box-sizing:border-box;border:1.3px solid #8a8e98;border-radius:7px;"></div>
<div class="t" style="top:562.00px;font-size:17px;color:#ebebee;font-weight:700;letter-spacing:-0.967px;left:1226.4px;transform:translateX(-50%);">Img</div>
<div style="left:1256.2px;top:556px;width:66.5px;height:28px;background:transparent;box-sizing:border-box;border:1.3px solid #8a8e98;border-radius:7px;"></div>
<div class="t" style="top:562.00px;font-size:17px;color:#ebebee;font-weight:700;letter-spacing:-0.047px;left:1289.45px;transform:translateX(-50%);">Media</div>
<div style="left:1329px;top:556px;width:87.40000000000009px;height:28px;background:transparent;box-sizing:border-box;border:1.3px solid #8a8e98;border-radius:7px;"></div>
<div class="t" style="top:562.00px;font-size:17px;color:#ebebee;font-weight:700;letter-spacing:-0.010px;left:1372.7px;transform:translateX(-50%);">Manifest</div>
<div style="left:1423px;top:556px;width:43.90000000000009px;height:28px;background:transparent;box-sizing:border-box;border:1.3px solid #8a8e98;border-radius:7px;"></div>
<div class="t" style="top:562.00px;font-size:17px;color:#ebebee;font-weight:700;letter-spacing:-1.991px;left:1444.95px;transform:translateX(-50%);">WS</div>
<div style="left:1474.3px;top:556px;width:64.90000000000009px;height:28px;background:transparent;box-sizing:border-box;border:1.3px solid #8a8e98;border-radius:7px;"></div>
<div class="t" style="top:562.00px;font-size:17px;color:#ebebee;font-weight:700;letter-spacing:-1.018px;left:1506.75px;transform:translateX(-50%);">Wasm</div>
<div style="left:1546.3px;top:556px;width:63.100000000000136px;height:28px;background:transparent;box-sizing:border-box;border:1.3px solid #8a8e98;border-radius:7px;"></div>
<div class="t" style="top:562.00px;font-size:17px;color:#ebebee;font-weight:700;letter-spacing:-0.186px;left:1577.85px;transform:translateX(-50%);">Other</div>
<svg style="left:1628px;top:561px;" width="18" height="18" viewBox="0 0 18 18"><rect x="0.75" y="0.75" width="16.5" height="16.5" rx="3" fill="#3a3b3e" stroke="#8c8e94" stroke-width="1.5"/></svg>
<div class="t" style="top:561.00px;font-size:18.8px;color:#c7c9d0;font-weight:400;letter-spacing:0.069px;left:1655px;">Blocked response cookies</div>
<svg style="left:1899px;top:561px;" width="18" height="18" viewBox="0 0 18 18"><rect x="0.75" y="0.75" width="16.5" height="16.5" rx="3" fill="#3a3b3e" stroke="#8c8e94" stroke-width="1.5"/></svg>
<div class="t" style="top:561.00px;font-size:18.8px;color:#c7c9d0;font-weight:400;letter-spacing:0.095px;left:1925.8px;">Blocked requests</div>
<svg style="left:2095px;top:561px;" width="18" height="18" viewBox="0 0 18 18"><rect x="0.75" y="0.75" width="16.5" height="16.5" rx="3" fill="#3a3b3e" stroke="#8c8e94" stroke-width="1.5"/></svg>
<div class="t" style="top:561.00px;font-size:18.8px;color:#c7c9d0;font-weight:400;letter-spacing:0.411px;left:2122.3px;">3rd-party requests</div>
<div style="left:0px;top:710px;width:2559px;height:1px;background:#3a4150;"></div>
<div style="left:117px;top:590px;width:1px;height:120px;background:#3d4354;"></div>
<div class="t" style="top:597.00px;font-size:15.2px;color:#e3e4e8;font-weight:400;right:2445.8px;">5 ms</div>
<div style="left:235px;top:590px;width:1px;height:120px;background:#3d4354;"></div>
<div class="t" style="top:597.00px;font-size:15.2px;color:#e3e4e8;font-weight:400;right:2327.8px;">10 ms</div>
<div style="left:354px;top:590px;width:1px;height:120px;background:#3d4354;"></div>
<div class="t" style="top:597.00px;font-size:15.2px;color:#e3e4e8;font-weight:400;right:2208.8px;">15 ms</div>
<div style="left:472px;top:590px;width:1px;height:120px;background:#3d4354;"></div>
<div class="t" style="top:597.00px;font-size:15.2px;color:#e3e4e8;font-weight:400;right:2090.8px;">20 ms</div>
<div style="left:590px;top:590px;width:1px;height:120px;background:#3d4354;"></div>
<div class="t" style="top:597.00px;font-size:15.2px;color:#e3e4e8;font-weight:400;right:1972.8px;">25 ms</div>
<div style="left:708px;top:590px;width:1px;height:120px;background:#3d4354;"></div>
<div class="t" style="top:597.00px;font-size:15.2px;color:#e3e4e8;font-weight:400;right:1854.8px;">30 ms</div>
<div style="left:826px;top:590px;width:1px;height:120px;background:#3d4354;"></div>
<div class="t" style="top:597.00px;font-size:15.2px;color:#e3e4e8;font-weight:400;right:1736.8px;">35 ms</div>
<div style="left:944px;top:590px;width:1px;height:120px;background:#3d4354;"></div>
<div class="t" style="top:597.00px;font-size:15.2px;color:#e3e4e8;font-weight:400;right:1618.8px;">40 ms</div>
<div style="left:1062px;top:590px;width:1px;height:120px;background:#3d4354;"></div>
<div class="t" style="top:597.00px;font-size:15.2px;color:#e3e4e8;font-weight:400;right:1500.8px;">45 ms</div>
<div style="left:1180px;top:590px;width:1px;height:120px;background:#3d4354;"></div>
<div class="t" style="top:597.00px;font-size:15.2px;color:#e3e4e8;font-weight:400;right:1382.8px;">50 ms</div>
<div style="left:1299px;top:590px;width:1px;height:120px;background:#3d4354;"></div>
<div class="t" style="top:597.00px;font-size:15.2px;color:#e3e4e8;font-weight:400;right:1263.8px;">55 ms</div>
<div style="left:1417px;top:590px;width:1px;height:120px;background:#3d4354;"></div>
<div class="t" style="top:597.00px;font-size:15.2px;color:#e3e4e8;font-weight:400;right:1145.8px;">60 ms</div>
<div style="left:1535px;top:590px;width:1px;height:120px;background:#3d4354;"></div>
<div class="t" style="top:597.00px;font-size:15.2px;color:#e3e4e8;font-weight:400;right:1027.8px;">65 ms</div>
<div style="left:1653px;top:590px;width:1px;height:120px;background:#3d4354;"></div>
<div class="t" style="top:597.00px;font-size:15.2px;color:#e3e4e8;font-weight:400;right:909.8px;">70 ms</div>
<div style="left:1771px;top:590px;width:1px;height:120px;background:#3d4354;"></div>
<div class="t" style="top:597.00px;font-size:15.2px;color:#e3e4e8;font-weight:400;right:791.8px;">75 ms</div>
<div style="left:1889px;top:590px;width:1px;height:120px;background:#3d4354;"></div>
<div class="t" style="top:597.00px;font-size:15.2px;color:#e3e4e8;font-weight:400;right:673.8px;">80 ms</div>
<div style="left:2007px;top:590px;width:1px;height:120px;background:#3d4354;"></div>
<div class="t" style="top:597.00px;font-size:15.2px;color:#e3e4e8;font-weight:400;right:555.8px;">85 ms</div>
<div style="left:2126px;top:590px;width:1px;height:120px;background:#3d4354;"></div>
<div class="t" style="top:597.00px;font-size:15.2px;color:#e3e4e8;font-weight:400;right:436.8000000000002px;">90 ms</div>
<div style="left:2244px;top:590px;width:1px;height:120px;background:#3d4354;"></div>
<div class="t" style="top:597.00px;font-size:15.2px;color:#e3e4e8;font-weight:400;right:318.8000000000002px;">95 ms</div>
<div style="left:2362px;top:590px;width:1px;height:120px;background:#3d4354;"></div>
<div class="t" style="top:597.00px;font-size:15.2px;color:#e3e4e8;font-weight:400;right:200.80000000000018px;">100 ms</div>
<div style="left:2480px;top:590px;width:1px;height:120px;background:#3d4354;"></div>
<div class="t" style="top:597.00px;font-size:15.2px;color:#e3e4e8;font-weight:400;right:82.80000000000018px;">105 ms</div>
<div class="t" style="top:597.00px;font-size:15.2px;color:#e3e4e8;font-weight:400;right:8px;">1</div>
<div style="left:0px;top:590px;width:2px;height:120px;background:#6b7282;"></div>
<div style="left:0px;top:590px;width:7px;height:28px;background:#353b4c;box-sizing:border-box;border:1px solid #4d5566;border-left:0;border-radius:0 6px 6px 0;"></div>
<div style="left:1px;top:599px;width:2px;height:10px;background:#8ab4f8;"></div>
<div style="left:2557px;top:590px;width:2px;height:120px;background:#6b7282;"></div>
<div style="left:2553px;top:590px;width:6px;height:29px;background:#353b4c;box-sizing:border-box;border:1px solid #4d5566;border-right:0;border-radius:6px 0 0 6px;"></div>
<div style="left:2557px;top:599px;width:2px;height:10px;background:#8ab4f8;"></div>
<div style="left:0px;top:711px;width:277px;height:40px;background:#1d1e22;"></div>
<div style="left:0px;top:750px;width:277px;height:1px;background:#3a4150;"></div>
<div class="t" style="top:722.00px;font-size:18.8px;color:#e3e4e8;font-weight:400;letter-spacing:-0.703px;left:7.6px;">Name</div>
<div style="left:0px;top:751px;width:277px;height:32px;background:#353b4c;"></div>
<div style="left:0px;top:783px;width:277px;height:32px;background:#1a1b1e;"></div>
<svg style="left:9px;top:757px;" width="19" height="20" viewBox="0 0 19 20"><path d="M2 2.5a1.5 1.5 0 0 1 1.5-1.5H11l5.5 5.5v10.5a1.5 1.5 0 0 1-1.5 1.5H3.5A1.5 1.5 0 0 1 2 17z" fill="none" stroke="#c4c7d0" stroke-width="1.7" stroke-linejoin="round"/><path d="M11 1v5.5h5.5" fill="#c4c7d0"/></svg>
<div class="t" style="top:759.00px;font-size:18.8px;color:#d6def8;font-weight:400;letter-spacing:0.068px;left:35.4px;">log?format=json&amp;hasfast...</div>
<svg style="left:7px;top:789px;" width="22" height="19" viewBox="0 0 22 19"><text x="0" y="15" font-family="Liberation Sans" font-size="17" font-weight="700" fill="#f08c46">{</text><text x="14" y="15" font-family="Liberation Sans" font-size="17" font-weight="700" fill="#f08c46">}</text><rect x="9.5" y="6" width="2.2" height="2.2" fill="#f08c46"/><path d="M10.6 10.5v3.5l-1.5 2" stroke="#f08c46" stroke-width="2" fill="none"/></svg>
<div class="t" style="top:790.00px;font-size:18.8px;color:#e3e4e8;font-weight:400;letter-spacing:-0.037px;left:35.4px;">log_event?alt=json&amp;key=...</div>
<div style="left:277px;top:711px;width:1px;height:662px;background:#3a4150;"></div>
<div style="left:0px;top:1334px;width:277px;height:1px;background:#3a4150;"></div>
<div class="t" style="top:1345.00px;font-size:18.8px;color:#c7c9d0;font-weight:400;letter-spacing:0.145px;left:15.6px;">2 / 3 requests</div>
<div style="left:145px;top:1343px;width:2px;height:23px;background:#5e636e;"></div>
<div class="t" style="top:1345.00px;font-size:18.8px;color:#c7c9d0;font-weight:400;letter-spacing:-0.044px;left:160px;">207 B / 207 B</div>
<div style="left:0px;top:468px;width:1px;height:905px;background:#505157;"></div>
<div style="left:278px;top:711px;width:2281px;height:39px;background:#2d3344;"></div>
<div style="left:278px;top:750px;width:2281px;height:1px;background:#3a4150;"></div>
<svg style="left:296px;top:723px;" width="16" height="16" viewBox="0 0 16 16"><path d="M1 1l14 14M15 1L1 15" stroke="#c4c7d0" stroke-width="2"/></svg>
<div class="t" style="top:723.00px;font-size:18.8px;color:#c7c9d0;font-weight:400;letter-spacing:-0.167px;left:337.8px;">Headers</div>
<div class="t" style="top:723.00px;font-size:18.8px;color:#c7c9d0;font-weight:400;letter-spacing:-0.229px;left:437.6px;">Payload</div>
<div class="t" style="top:723.00px;font-size:18.8px;color:#c7c9d0;font-weight:400;letter-spacing:-0.102px;left:533.9px;">Preview</div>
<div class="t" style="top:723.00px;font-size:18.8px;color:#c7c9d0;font-weight:400;letter-spacing:-0.325px;left:630px;">Response</div>
<div class="t" style="top:723.00px;font-size:18.8px;color:#c7c9d0;font-weight:400;letter-spacing:0.251px;left:742.7px;">Initiator</div>
<div class="t" style="top:723.00px;font-size:18.8px;color:#8cb4f8;font-weight:400;letter-spacing:0.249px;left:836.7px;">Timing</div>
<div class="t" style="top:723.00px;font-size:18.8px;color:#c7c9d0;font-weight:400;letter-spacing:-0.127px;left:924.3px;">Cookies</div>
<div style="left:822px;top:748px;width:87.5px;height:3px;background:#7ea6ee;"></div>
<div class="t" style="top:773.00px;font-size:18.8px;color:#e3e4e8;font-weight:400;letter-spacing:-0.079px;left:302.6px;">Queued at 0</div>
<div class="t" style="top:805.00px;font-size:18.8px;color:#e3e4e8;font-weight:400;letter-spacing:0.107px;left:302.6px;">Started at 103.45 ms</div>
<div class="t" style="top:853.00px;font-size:18.8px;color:#9a9ba0;font-weight:400;letter-spacing:-0.030px;left:302.3px;">Resource Scheduling</div>
<div class="t" style="top:853.00px;font-size:18.8px;color:#9a9ba0;font-weight:400;letter-spacing:-0.812px;right:37.90000000000009px;">DURATION</div>
<div class="t" style="top:886.00px;font-size:18.8px;color:#e3e4e8;font-weight:400;letter-spacing:-0.136px;left:320.3px;">Queueing</div>
<div style="left:536px;top:884px;width:936px;height:22px;background:transparent;box-sizing:border-box;border:1px solid #a7a9ae;"></div>
<div class="t" style="top:886.00px;font-size:18.8px;color:#e3e4e8;font-weight:400;letter-spacing:-0.125px;right:37.90000000000009px;">103.45 ms</div>
<div class="t" style="top:935.00px;font-size:18.8px;color:#9a9ba0;font-weight:400;letter-spacing:0.206px;left:302.3px;">Connection Start</div>
<div class="t" style="top:935.00px;font-size:18.8px;color:#9a9ba0;font-weight:400;letter-spacing:-0.812px;right:37.90000000000009px;">DURATION</div>
<div class="t" style="top:969.00px;font-size:18.8px;color:#e3e4e8;font-weight:400;letter-spacing:-0.040px;left:320.3px;">Stalled</div>
<div style="left:1472px;top:970px;width:12px;height:15px;background:#7b7c80;"></div>
<div class="t" style="top:969.00px;font-size:18.8px;color:#e3e4e8;font-weight:400;right:37.90000000000009px;">1.24 ms</div>
<div class="t" style="top:1003.00px;font-size:18.8px;color:#e3e4e8;font-weight:400;letter-spacing:-0.222px;left:320.3px;">DNS Lookup</div>
<div style="left:1484px;top:1004px;width:1px;height:15px;background:#55c0e3;"></div>
<div class="t" style="top:1003.00px;font-size:18.8px;color:#e3e4e8;font-weight:400;right:37.90000000000009px;">7 μs</div>
<div class="t" style="top:1038.00px;font-size:18.8px;color:#e3e4e8;font-weight:400;letter-spacing:0.241px;left:320.3px;">Initial connection</div>
<div style="left:1485px;top:1039px;width:462px;height:15px;background:#ff8250;"></div>
<div class="t" style="top:1038.00px;font-size:18.8px;color:#e3e4e8;font-weight:400;letter-spacing:-0.681px;right:37.90000000000009px;">51.01 ms</div>
<div class="t" style="top:1072.00px;font-size:18.8px;color:#e3e4e8;font-weight:400;letter-spacing:-1.650px;left:320.3px;">SSL</div>
<div style="left:1485px;top:1073px;width:462px;height:15px;background:#c882f7;"></div>
<div class="t" style="top:1072.00px;font-size:18.8px;color:#e3e4e8;font-weight:400;letter-spacing:-0.681px;right:37.90000000000009px;">51.01 ms</div>
<div class="t" style="top:1121.00px;font-size:18.8px;color:#9a9ba0;font-weight:400;letter-spacing:-0.130px;left:301.7px;">Request/Response</div>
<div class="t" style="top:1121.00px;font-size:18.8px;color:#9a9ba0;font-weight:400;letter-spacing:-0.812px;right:37.90000000000009px;">DURATION</div>
<div class="t" style="top:1155.00px;font-size:18.8px;color:#e3e4e8;font-weight:400;letter-spacing:0.003px;left:320.3px;">Request sent</div>
<div style="left:1948px;top:1152px;width:3px;height:23px;background:#1ea3c8;"></div>
<div class="t" style="top:1155.00px;font-size:18.8px;color:#e3e4e8;font-weight:400;right:37.90000000000009px;">0.35 ms</div>
<div class="t" style="top:1189.00px;font-size:18.8px;color:#e3e4e8;font-weight:400;letter-spacing:0.172px;left:320.3px;">Waiting for server</div>
<div class="t" style="top:1209.00px;font-size:18.8px;color:#e3e4e8;font-weight:400;letter-spacing:0.005px;left:320.3px;">response</div>
<div style="left:1951px;top:1196px;width:444.5px;height:23px;background:#2fb85a;"></div>
<div class="t" style="top:1199.00px;font-size:18.8px;color:#e3e4e8;font-weight:400;letter-spacing:-0.181px;right:37.90000000000009px;">49.18 ms</div>
<div class="t" style="top:1243.00px;font-size:18.8px;color:#e3e4e8;font-weight:400;letter-spacing:0.098px;left:320.3px;">Content Download</div>
<div style="left:2395.5px;top:1240px;width:6px;height:23px;background:#4a87f0;"></div>
<div class="t" style="top:1243.00px;font-size:18.8px;color:#e3e4e8;font-weight:400;right:37.90000000000009px;">0.59 ms</div>
<div class="t" style="top:1292.00px;font-size:18.8px;color:#8ab4f8;font-weight:400;letter-spacing:-0.056px;left:302px;text-decoration:underline;text-underline-offset:2px;">Explanation</div>
<div class="t" style="top:1292.00px;font-size:18.5px;color:#e3e4e8;font-weight:700;letter-spacing:0.616px;right:37.90000000000009px;">206.10 ms</div>
<div style="left:302px;top:1347px;width:2220px;height:2px;background:#434b5c;"></div>
<div style="left:2537px;top:751px;width:15px;height:615px;background:#262626;"></div>
<div style="left:2537px;top:751px;width:1px;height:615px;background:#3a3a3a;"></div>
<div style="left:2551px;top:751px;width:1px;height:615px;background:#474747;"></div>
<div style="left:2541px;top:763px;width:8px;height:529px;background:#5f6064;border-radius:4px;"></div>
<div style="left:0px;top:1363px;width:10px;height:10px;background:transparent;box-shadow:-4px 4px 0 4px #000;border-bottom-left-radius:10px;"></div>
<div style="left:2549px;top:1363px;width:10px;height:10px;background:transparent;box-shadow:4px 4px 0 4px #000;border-bottom-right-radius:10px;"></div>
</body></html>
